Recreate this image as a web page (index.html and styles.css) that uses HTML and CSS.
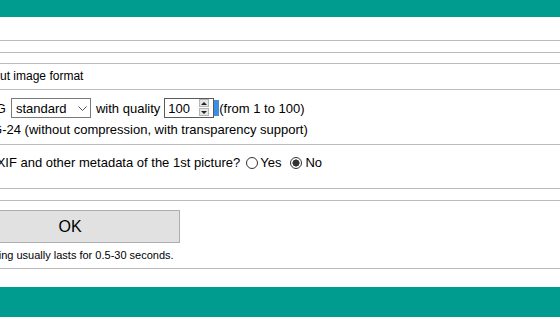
FILE: index.html
```html
<!DOCTYPE html>
<html lang="en">
<head>
  <meta charset="UTF-8">
  <meta name="viewport" content="width=device-width,initial-scale=1.0">
  <title>Output image format</title>
  <link rel="stylesheet" href="styles.css">
</head>
<body>

  <div class="topbar"></div>

  <div class="page">
    <div class="block gap-11"></div>
    <div class="block gap-10"></div>

    <div class="block">
      <div class="heading">Output image format</div>
    </div>

    <div class="block format">
      <div class="opt-row">
        <span class="opt-name">JPEG</span>
        <span class="select-wrap">
          <select class="select">
            <option>standard</option>
            <option>progressive</option>
          </select>
          <svg class="chevron" width="9" height="5" viewBox="0 0 9 5">
            <polyline points="0.5,0.5 4.5,4.5 8.5,0.5" fill="none" stroke="#555" stroke-width="1"/>
          </svg>
        </span>
        <span class="label">with quality</span>
        <span class="num-wrap">
          <input class="num" type="text" value="100">
          <span class="spin">
            <span class="spin-btn"><i class="arrow-up"></i></span>
            <span class="spin-btn"><i class="arrow-down"></i></span>
          </span>
        </span>
        <span class="sel-mark"></span>
        <span class="label">(from 1 to 100)</span>
      </div>
      <div class="opt-line">PNG-24 (without compression, with transparency support)</div>
    </div>

    <div class="block exif">
      <div class="exif-row">
        <span>Copy EXIF and other metadata of the 1st picture?</span>
        <label class="radio"><input type="radio" name="exif">Yes</label>
        <label class="radio radio-no"><input type="radio" name="exif" checked>No</label>
      </div>
    </div>

    <div class="block gap-11"></div>

    <div class="block submit">
      <button class="ok-btn">OK</button>
      <p class="note">Processing usually lasts for 0.5-30 seconds.</p>
    </div>

    <div class="block bottom"></div>
  </div>

  <div class="footer"></div>

</body>
</html>
```

FILE: styles.css
```css
/* 画面は左が切れた状態なので .page を左にずらしている */

body {
  margin: 0;
  padding: 0;
  background: #FFFFFF;
  color: #000000;
  font-family: "Liberation Sans", Arial, sans-serif;
  font-size: 13px;
  overflow: hidden;
  height: 317px;
}

.topbar {
  height: 17px;
  background: #009c90;
  margin-bottom: 23px;
}

.footer {
  height: 30px;
  background: #009c90;
}

.page {
  margin-left: -48px;
}

.block {
  border-top: 1px solid #bcbcbc;
}

.gap-11 { height: 11px; }
.gap-10 { height: 10px; }

.heading {
  font-size: 12px;
  line-height: 14px;
  padding: 5px 0 6px 22px;
}

/* ===== format ===== */
.format {
  padding: 8px 0 7px 0;
}

.opt-row {
  display: flex;
  align-items: center;
  height: 20px;
  padding-left: 20px;
  white-space: nowrap;
}

.select-wrap {
  position: relative;
  margin-left: 5px;
}

.select {
  display: block;
  appearance: none;
  -webkit-appearance: none;
  box-sizing: border-box;
  width: 80px;
  height: 20px;
  margin: 0;
  padding: 0 0 0 4px;
  border: 1px solid #7a7a7a;
  border-radius: 0;
  background: #FFFFFF;
  color: #000000;
  font-family: inherit;
  font-size: 13px;
}

.chevron {
  position: absolute;
  top: 8px;
  left: 67px;
  pointer-events: none;
}

.label {
  margin-left: 5px;
}

.num-wrap {
  position: relative;
  margin-left: 4px;
}

.num {
  display: block;
  box-sizing: border-box;
  width: 50px;
  height: 20px;
  margin: 0;
  padding: 0 0 0 3px;
  border: 1px solid #5a5a5a;
  border-radius: 0;
  font-family: inherit;
  font-size: 13px;
  color: #000000;
  outline: none;
}

.spin {
  position: absolute;
  top: 1px;
  bottom: 2px;
  right: 5px;
  width: 10px;
  display: flex;
  flex-direction: column;
  gap: 1px;
}

.spin-btn {
  flex: 1;
  background: #e6e6e6;
  border: 1px solid #b4b4b4;
  display: flex;
  justify-content: center;
  align-items: center;
}

.arrow-up,
.arrow-down {
  width: 0;
  height: 0;
  border-left: 3px solid transparent;
  border-right: 3px solid transparent;
}

.arrow-up { border-bottom: 3px solid #222; }
.arrow-down { border-top: 3px solid #222; }

.sel-mark {
  width: 5px;
  height: 16px;
  background: #3e8ddf;
}

.sel-mark + .label {
  margin-left: 0;
}

.opt-line {
  margin-top: 4px;
  line-height: 15px;
  padding-left: 22px;
  white-space: nowrap;
}

/* ===== exif ===== */
.exif {
  padding: 10px 0 18px 0;
}

.exif-row {
  display: flex;
  align-items: center;
  height: 15px;
  padding-left: 2px;
  white-space: nowrap;
}

.radio {
  display: flex;
  align-items: center;
  gap: 2px;
  margin-left: 6px;
}

.radio-no {
  margin-left: 9px;
  gap: 3px;
}

.radio input {
  appearance: none;
  -webkit-appearance: none;
  box-sizing: border-box;
  width: 12px;
  height: 12px;
  margin: 0;
  border: 1px solid #333333;
  border-radius: 50%;
  background: #FFFFFF;
}

.radio input:checked {
  background: radial-gradient(circle, #333333 0 3.3px, #FFFFFF 3.8px);
}

/* ===== submit ===== */
.submit {
  padding: 9px 0 6px 8px;
}

.ok-btn {
  display: block;
  box-sizing: border-box;
  width: 220px;
  height: 33px;
  margin: 0;
  background: #e1e1e1;
  border: 1px solid #adadad;
  border-radius: 0;
  font-family: inherit;
  font-size: 16px;
  color: #000000;
}

.note {
  margin: 6px 0 0 -1px;
  font-size: 11px;
  line-height: 13px;
  white-space: nowrap;
}

.bottom {
  height: 18px;
}
```
